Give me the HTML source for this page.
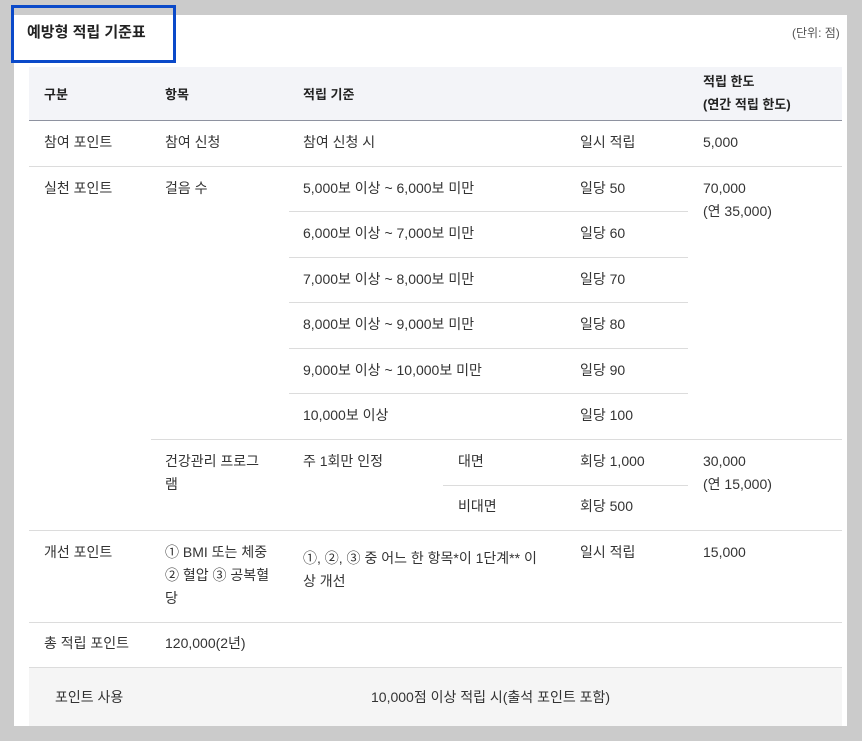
<!DOCTYPE html>
<html><head><meta charset="utf-8"><style>
body{margin:0;width:862px;height:741px;background:#cbcbcb;position:relative;overflow:hidden;font-family:"Liberation Sans","Noto Sans CJK KR",sans-serif;font-size:14px;color:#333;}
.a{position:absolute;line-height:23px;white-space:nowrap}
.l{position:absolute;height:1px;background:#dcdcdc}
b{font-weight:bold;color:#222}
</style></head><body>
<div style="position:absolute;left:14px;top:15px;width:833px;height:711px;background:#fff"></div>
<div style="position:absolute;left:11px;top:5px;width:159px;height:52px;border:3px solid #0a49c9"></div>
<div class="a" style="left:27px;top:21px;font-weight:bold;font-size:15px;color:#222">예방형 적립 기준표</div>
<div class="a" style="left:792px;top:22px;font-size:12px;color:#555">(단위: 점)</div>
<div style="position:absolute;left:29px;top:67px;width:813px;height:53px;background:#f3f4f8;border-bottom:1px solid #8e92a0"></div>
<div class="a" style="left:44px;top:83px;font-size:13px"><b>구분</b></div>
<div class="a" style="left:165px;top:83px;font-size:13px"><b>항목</b></div>
<div class="a" style="left:303px;top:83px;font-size:13px"><b>적립 기준</b></div>
<div class="a" style="left:703px;top:70px;font-size:13px"><b>적립 한도<br>(연간 적립 한도)</b></div>

<div class="a" style="left:44px;top:131px">참여 포인트</div>
<div class="a" style="left:165px;top:131px">참여 신청</div>
<div class="a" style="left:303px;top:131px">참여 신청 시</div>
<div class="a" style="left:580px;top:131px">일시 적립</div>
<div class="a" style="left:703px;top:131px">5,000</div>
<div class="l" style="left:29px;top:166px;width:813px"></div>

<div class="a" style="left:44px;top:177px">실천 포인트</div>
<div class="a" style="left:165px;top:177px">걸음 수</div>
<div class="a" style="left:703px;top:177px">70,000<br>(연 35,000)</div>
<div class="a" style="left:303px;top:177px">5,000보 이상 ~ 6,000보 미만</div><div class="a" style="left:580px;top:177px">일당 50</div>
<div class="l" style="left:289px;top:211px;width:399px"></div>
<div class="a" style="left:303px;top:222px">6,000보 이상 ~ 7,000보 미만</div><div class="a" style="left:580px;top:222px">일당 60</div>
<div class="l" style="left:289px;top:257px;width:399px"></div>
<div class="a" style="left:303px;top:268px">7,000보 이상 ~ 8,000보 미만</div><div class="a" style="left:580px;top:268px">일당 70</div>
<div class="l" style="left:289px;top:302px;width:399px"></div>
<div class="a" style="left:303px;top:313px">8,000보 이상 ~ 9,000보 미만</div><div class="a" style="left:580px;top:313px">일당 80</div>
<div class="l" style="left:289px;top:348px;width:399px"></div>
<div class="a" style="left:303px;top:359px">9,000보 이상 ~ 10,000보 미만</div><div class="a" style="left:580px;top:359px">일당 90</div>
<div class="l" style="left:289px;top:393px;width:399px"></div>
<div class="a" style="left:303px;top:404px">10,000보 이상</div><div class="a" style="left:580px;top:404px">일당 100</div>
<div class="l" style="left:151px;top:439px;width:691px"></div>

<div class="a" style="left:165px;top:450px">건강관리 프로그<br>램</div>
<div class="a" style="left:303px;top:450px">주 1회만 인정</div>
<div class="a" style="left:458px;top:450px">대면</div><div class="a" style="left:580px;top:450px">회당 1,000</div>
<div class="a" style="left:703px;top:450px">30,000<br>(연 15,000)</div>
<div class="l" style="left:443px;top:485px;width:245px"></div>
<div class="a" style="left:458px;top:495px">비대면</div><div class="a" style="left:580px;top:495px">회당 500</div>
<div class="l" style="left:29px;top:530px;width:813px"></div>

<div class="a" style="left:44px;top:541px">개선 포인트</div>
<div class="a" style="left:165px;top:541px">① BMI 또는 체중<br>② 혈압 ③ 공복혈<br>당</div>
<div class="a" style="left:303px;top:547px">①, ②, ③ 중 어느 한 항목*이 1단계** 이<br>상 개선</div>
<div class="a" style="left:580px;top:541px">일시 적립</div>
<div class="a" style="left:703px;top:541px">15,000</div>
<div class="l" style="left:29px;top:622px;width:813px"></div>

<div class="a" style="left:44px;top:632px">총 적립 포인트</div>
<div class="a" style="left:165px;top:632px">120,000(2년)</div>
<div class="l" style="left:29px;top:667px;width:813px"></div>
<div style="position:absolute;left:29px;top:668px;width:813px;height:58px;background:#f5f5f5"></div>
<div class="a" style="left:55px;top:686px">포인트 사용</div>
<div class="a" style="left:371px;top:686px">10,000점 이상 적립 시(출석 포인트 포함)</div>
</body></html>
